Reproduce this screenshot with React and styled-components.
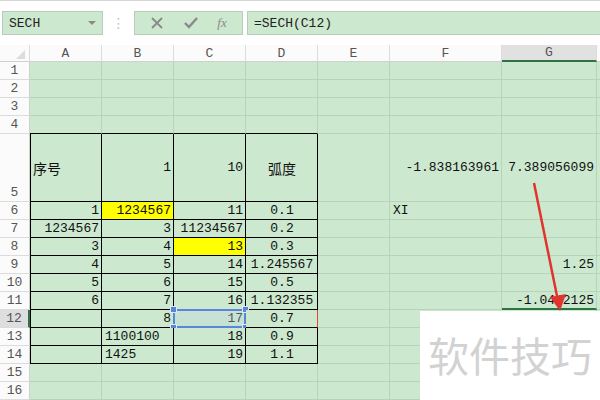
import React from 'react'
import styled, { createGlobalStyle } from 'styled-components'

const GlobalStyle = createGlobalStyle`
    body {
        margin: 0;
        background: #fff;
        font-family: "Liberation Mono", "Noto Sans CJK SC", monospace;
        color: #111;
    }
`

const GREEN = '#cce8cf'
const GRID = '#b7d3ba'

const Page = styled.div`
    width: 600px;
    height: 400px;
    overflow: hidden;
    position: relative;
`

const Toolbar = styled.div`
    height: 45px;
    box-sizing: border-box;
    border-top: 1px solid #d6d6d6;
    padding-top: 10px;
    display: flex;
    align-items: flex-start;
`

const NameBox = styled.div`
    margin-left: 2px;
    width: 101px;
    height: 24px;
    box-sizing: border-box;
    background: ${GREEN};
    border: 1px solid #b9ccbb;
    display: flex;
    align-items: center;
    justify-content: space-between;
    padding: 0 6px 0 6px;
    font-size: 13px;
    color: #222;
`

const Caret = styled.span`
    width: 0;
    height: 0;
    border-left: 4px solid transparent;
    border-right: 4px solid transparent;
    border-top: 4px solid #8a8a8a;
`

const Dots = styled.div`
    width: 31px;
    height: 24px;
    display: flex;
    align-items: center;
    justify-content: center;
    color: #c4c4c4;
    font-size: 14px;
    font-family: "DejaVu Sans", sans-serif;
`

const FuncBox = styled.div`
    width: 109px;
    height: 24px;
    box-sizing: border-box;
    background: ${GREEN};
    border: 1px solid #b9ccbb;
    display: flex;
    align-items: center;
    justify-content: space-around;
    padding: 0 6px;
    color: #8a8a8a;
`

const Fx = styled.span`
    font-family: "Liberation Serif", serif;
    font-style: italic;
    font-size: 13px;
    color: #8a8a8a;
`

const FormulaBox = styled.div`
    margin-left: 4px;
    flex: 1;
    height: 24px;
    box-sizing: border-box;
    background: ${GREEN};
    border: 1px solid #b9ccbb;
    border-right: none;
    display: flex;
    align-items: center;
    padding-left: 6px;
    font-size: 13px;
    color: #222;
`

const Sheet = styled.div`
    display: grid;
    grid-template-columns: 30px repeat(5, 72px) 112px 95px 1fr;
    grid-template-rows: 17px repeat(4, 18px) 68px repeat(11, 18px);
`

const ColHead = styled.div`
    box-sizing: border-box;
    background: ${p => (p.$active ? '#e1e1e1' : '#fbfbfb')};
    border-right: 1px solid ${p => (p.$last ? 'transparent' : '#dcdcdc')};
    border-bottom: ${p => (p.$active ? '2px solid #2f7243' : '1px solid #d0d0d0')};
    display: flex;
    align-items: center;
    justify-content: center;
    font-size: 13px;
    color: #555;
    position: relative;
`

const Corner = styled.span`
    position: absolute;
    right: 4px;
    bottom: 2px;
    width: 0;
    height: 0;
    border-left: 9px solid transparent;
    border-bottom: 9px solid #dcdcdc;
`

const RowHead = styled.div`
    box-sizing: border-box;
    background: ${p => (p.$active ? '#dedede' : '#fbfbfb')};
    border-bottom: 1px solid #dcdcdc;
    border-right: ${p => (p.$active ? '2px solid #2f7243' : '1px solid #d0d0d0')};
    display: flex;
    align-items: flex-end;
    justify-content: center;
    font-size: 13px;
    line-height: 17px;
    color: #555;
`

const Cell = styled.div`
    box-sizing: border-box;
    background: ${p => p.$bg || GREEN};
    border-right: 1px solid ${p => p.$right || GRID};
    border-bottom: ${p => p.$bottomW || 1}px solid ${p => p.$bottom || GRID};
    box-shadow: ${p => (p.$leftEdge ? 'inset 1px 0 0 #000' : 'none')};
    display: flex;
    align-items: center;
    justify-content: ${p => p.$align === 'left' ? 'flex-start' : p.$align === 'center' ? 'center' : 'flex-end'};
    padding: 0 2px 0 3px;
    font-size: 13px;
    white-space: nowrap;
    position: relative;
`

const Han = styled.span`
    font-family: "Noto Sans CJK SC", sans-serif;
    font-size: 14px;
`

const Selection = styled.div`
    position: absolute;
    left: -1px;
    top: -1px;
    right: -1px;
    bottom: -1px;
    border: 2px solid #5a86d6;
    background: rgba(190, 214, 222, 0.35);
`

const Handle = styled.span`
    position: absolute;
    width: 5px;
    height: 5px;
    background: #5a86d6;
    border: 1px solid #dfe9f8;
    ${p => (p.$x === 'l' ? 'left: -5px;' : 'right: -5px;')}
    ${p => (p.$y === 't' ? 'top: -5px;' : 'bottom: -5px;')}
`

const Watermark = styled.div`
    position: absolute;
    left: 420px;
    top: 311px;
    width: 180px;
    height: 89px;
    background: #fff;
    display: flex;
    justify-content: center;
    padding-top: 21px;
    box-sizing: border-box;
    font-family: "Noto Sans CJK SC", sans-serif;
    font-size: 41px;
    line-height: 44px;
    color: #d2d2d2;
`

const Arrow = styled.svg`
    position: absolute;
    left: 0;
    top: 0;
    pointer-events: none;
`

const COLS = ['A', 'B', 'C', 'D', 'E', 'F', 'G']

// value, alignment, fill
const data = {
    5: { A: ['序号', 'left'], B: ['1'], C: ['10'], D: ['弧度', 'center'], F: ['-1.838163961'], G: ['7.389056099'] },
    6: { A: ['1'], B: ['1234567', 'right', '#ffff00'], C: ['11'], D: ['0.1', 'center'], F: ['XI', 'left'] },
    7: { A: ['1234567'], B: ['3'], C: ['11234567'], D: ['0.2', 'center'] },
    8: { A: ['3'], B: ['4'], C: ['13', 'right', '#ffff00'], D: ['0.3', 'center'] },
    9: { A: ['4'], B: ['5'], C: ['14'], D: ['1.245567', 'center'], G: ['1.25'] },
    10: { A: ['5'], B: ['6'], C: ['15'], D: ['0.5', 'center'] },
    11: { A: ['6'], B: ['7'], C: ['16'], D: ['1.132355', 'center'], G: ['-1.0442125'] },
    12: { B: ['8'], C: ['17'], D: ['0.7', 'center'] },
    13: { B: ['1100100', 'left'], C: ['18'], D: ['0.9', 'center'] },
    14: { B: ['1425', 'left'], C: ['19'], D: ['1.1', 'center'] },
}

const isHan = v => /[\u4e00-\u9fff]/.test(v)

const App = () => {
    const cells = [<ColHead key="corner"><Corner /></ColHead>]
    COLS.forEach(c => {
        cells.push(<ColHead key={'h' + c} $active={c === 'G'}>{c}</ColHead>)
    })
    cells.push(<ColHead key="hx" $last />)

    for (let r = 1; r <= 16; r++) {
        cells.push(<RowHead key={'r' + r} $active={r === 12}>{r}</RowHead>)
        COLS.forEach((c, i) => {
            const [v, align, bg] = (data[r] && data[r][c]) || []
            const boxed = r >= 5 && r <= 14 && i <= 3
            let right = boxed ? '#000' : undefined
            if (r === 12 && c === 'D') right = '#e8433a'
            let bottom = (boxed || (r === 4 && i <= 3)) ? '#000' : undefined
            let bottomW = 1
            if (r === 11 && c === 'G') { bottom = '#2f7243'; bottomW = 2 }
            cells.push(
                <Cell key={c + r} $align={align} $bg={bg} $right={right} $bottom={bottom}
                    $bottomW={bottomW} $leftEdge={boxed && i === 0}>
                    {v && (isHan(v) ? <Han>{v}</Han> : v)}
                    {r === 12 && c === 'C' && (
                        <Selection>
                            <Handle $x="l" $y="t" />
                            <Handle $x="r" $y="t" />
                            <Handle $x="l" $y="b" />
                            <Handle $x="r" $y="b" />
                        </Selection>
                    )}
                </Cell>
            )
        })
        cells.push(<Cell key={'x' + r} />)
    }

    return (
        <Page>
            <GlobalStyle />
            <Toolbar>
                <NameBox>SECH<Caret /></NameBox>
                <Dots>⋮</Dots>
                <FuncBox>
                    <svg width="14" height="14" viewBox="0 0 14 14">
                        <path d="M2 2 L12 12 M12 2 L2 12" stroke="#8a8a8a" strokeWidth="1.8" fill="none" />
                    </svg>
                    <svg width="16" height="14" viewBox="0 0 16 14">
                        <path d="M2 7 L6 11 L14 2" stroke="#8a8a8a" strokeWidth="2.4" fill="none" />
                    </svg>
                    <Fx>fx</Fx>
                </FuncBox>
                <FormulaBox>=SECH(C12)</FormulaBox>
            </Toolbar>
            <Sheet>
                {cells}
            </Sheet>
            <Arrow width="600" height="400" viewBox="0 0 600 400">
                <line x1="534" y1="183" x2="557" y2="296" stroke="#e2342f" strokeWidth="2.5" />
                <polygon points="550,297 566,294 560,311" fill="#e2342f" />
            </Arrow>
            <Watermark>软件技巧</Watermark>
        </Page>
    )
}

export default App
